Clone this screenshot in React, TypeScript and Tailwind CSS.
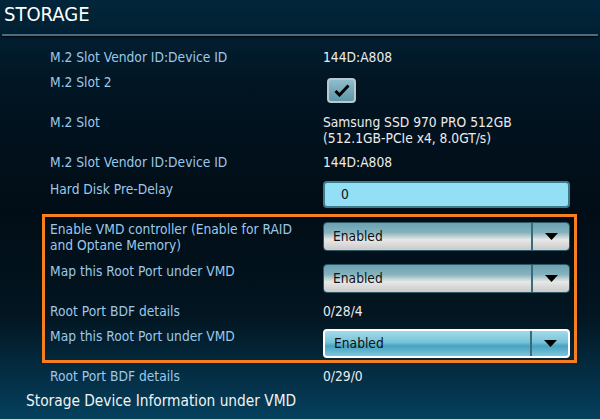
import React from 'react';

const Label = ({ children }: { children: React.ReactNode }) => (
  <div className="w-[273px] shrink-0 text-[13.7px] leading-4 text-[#9cc8ea]">{children}</div>
);

const Value = ({ children }: { children: React.ReactNode }) => (
  <div className="text-[13.7px] leading-4 text-[#ececec]">{children}</div>
);

const Select = ({ active }: { active?: boolean }) => (
  <div
    className={`flex h-[29px] w-[247px] rounded-[4px] border ${
      active
        ? 'border-2 border-white bg-[linear-gradient(to_bottom,#a3dbea_0%,#78c3d8_45%,#46a3c2_60%,#7cc6dc_100%)]'
        : 'border-[#2f5866] bg-[linear-gradient(to_bottom,#6aa2b2_0%,#86b2bd_35%,#e8e8e8_62%,#c9c9c9_100%)]'
    }`}
  >
    <div className="flex flex-1 items-center pl-[9px] text-[13.7px] text-[#111]">Enabled</div>
    <div className="w-[2px] bg-[#3b6a78]" />
    <div className="flex w-[36px] items-center justify-center">
      <svg width="13" height="7" viewBox="0 0 13 7">
        <path d="M0 0H13L6.5 7Z" fill="#000" />
      </svg>
    </div>
  </div>
);

export default function App() {
  return (
    <div className="h-[419px] w-[600px] overflow-hidden bg-[linear-gradient(to_bottom,#01263b_0%,#011523_20%,#010d16_50%,#021521_75%,#05405d_100%)] font-['DejaVu_Sans_Condensed','DejaVu_Sans',sans-serif]">
      <div className="pl-[4px] pt-[3px] text-[20px] leading-[22px] text-white">STORAGE</div>
      <div className="mx-[2px] mt-[9px] h-[2px] bg-[#4b6d82] shadow-[0_1px_2px_#000]" />

      <div className="mt-[13px] flex h-[25px] pl-[50px]">
        <Label>M.2 Slot Vendor ID:Device ID</Label>
        <Value>144D:A808</Value>
      </div>

      <div className="flex h-[40px] pl-[50px]">
        <Label>M.2 Slot 2</Label>
        <div className="ml-[4px] mt-[4px] flex h-[25px] w-[29px] items-center justify-center rounded-[4px] border-2 border-[#b9c9cf] bg-[linear-gradient(to_bottom,#8fbccb,#5d96a8)] shadow-[0_0_1px_#000]">
          <svg width="16" height="13" viewBox="0 0 16 13">
            <path d="M1.5 7L5.5 11L14.5 1.5" stroke="#000" strokeWidth="3" fill="none" />
          </svg>
        </div>
      </div>

      <div className="flex h-[40px] pl-[50px]">
        <Label>M.2 Slot</Label>
        <Value>
          Samsung SSD 970 PRO 512GB
          <br />
          (512.1GB-PCIe x4, 8.0GT/s)
        </Value>
      </div>

      <div className="flex h-[27px] pl-[50px]">
        <Label>M.2 Slot Vendor ID:Device ID</Label>
        <Value>144D:A808</Value>
      </div>

      <div className="flex h-[33px] pl-[50px]">
        <Label>Hard Disk Pre-Delay</Label>
        <div className="flex h-[27px] w-[247px] items-center rounded-[4px] border-2 border-[#3c7a8c] bg-[#93dff6] pl-[16px] text-[13.7px] text-[#111]">
          0
        </div>
      </div>

      <div className="ml-[42px] w-[535px] border-[3px] border-[#f57f21] pl-[5px] pt-[4px]">
        <div className="flex h-[42px]">
          <Label>
            Enable VMD controller (Enable for RAID
            <br />
            and Optane Memory)
          </Label>
          <div className="mt-[1px]">
            <Select />
          </div>
        </div>
        <div className="flex h-[40px]">
          <Label>Map this Root Port under VMD</Label>
          <div className="mt-[1px]">
            <Select />
          </div>
        </div>
        <div className="flex h-[25px]">
          <Label>Root Port BDF details</Label>
          <Value>0/28/4</Value>
        </div>
        <div className="flex h-[32px]">
          <Label>Map this Root Port under VMD</Label>
          <div className="mt-[1px]">
            <Select active />
          </div>
        </div>
      </div>

      <div className="mt-[5px] flex h-[25px] pl-[50px]">
        <Label>Root Port BDF details</Label>
        <Value>0/29/0</Value>
      </div>

      <div className="pl-[26px] text-[15.3px] leading-4 text-[#f2f2f2]">Storage Device Information under VMD</div>
    </div>
  );
}
